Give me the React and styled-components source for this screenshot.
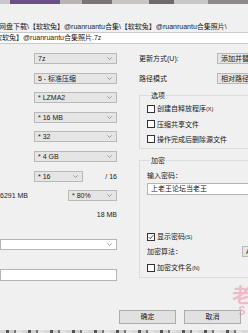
import React from "react";
import styled, { createGlobalStyle } from "styled-components";

const Global = createGlobalStyle`
  html, body { margin: 0; padding: 0; background: #f0f0f0; }
  body { font-family: "Liberation Sans", "Noto Sans CJK SC", sans-serif; }
`;

const Dialog = styled.div`
  position: relative;
  width: 248px;
  height: 333px;
  overflow: hidden;
  background: #f0f0f0;
  display: flex;
  flex-direction: column;
  font-family: "Liberation Sans", "Noto Sans CJK SC", sans-serif;
  font-size: 7px;
  line-height: 9px;
  color: #1a1a1a;
`;

const Strip = styled.div`
  flex: none;
  height: ${(p) => p.$h}px;
  background: ${(p) =>
    p.$bottom
      ? "repeating-linear-gradient(90deg, #d8d8d8 0 6px, #555 6px 9px, #cfcfcf 9px 14px, #777 14px 16px, #e2e2e2 16px 22px)"
      : "linear-gradient(90deg, #cac6cc 0 4%, #6b4f86 4% 24%, #b9b4b2 24% 33%, #7b7474 33% 45%, #c8c4c2 45% 60%, #6e6a6d 60% 70%, #c9c6c6 70% 84%, #8d8a89 84% 100%)"};
  margin-top: ${(p) => (p.$bottom ? "auto" : "0")};
`;

const PathBlock = styled.div`
  flex: none;
  margin-top: 17.5px;
  display: flex;
  flex-direction: column;
  gap: 1.5px;
`;

const PathLine = styled.div`
  white-space: nowrap;
  overflow: hidden;
  height: 9px;
  text-indent: ${(p) => p.$shift}px;
`;

const PathBox = styled.div`
  white-space: nowrap;
  overflow: hidden;
  height: 10px;
  line-height: 10px;
  background: #fff;
  border-top: 1px solid #c9c9c9;
  border-bottom: 1px solid #c9c9c9;
  text-indent: ${(p) => p.$shift}px;
`;

const Body = styled.div`
  flex: none;
  margin-top: 9px;
  display: flex;
  align-items: flex-start;
`;

const LeftCol = styled.div`
  flex: none;
  width: 117px;
  display: flex;
  flex-direction: column;
`;

const ComboStack = styled.div`
  display: flex;
  flex-direction: column;
  align-items: flex-end;
  gap: 8.6px;
`;

const Row = styled.div`
  display: flex;
  align-items: center;
  justify-content: space-between;
  width: 100%;
  height: 11px;
`;

const ComboBox = styled.div`
  flex: none;
  box-sizing: border-box;
  width: ${(p) => p.$w}px;
  height: 11px;
  display: flex;
  align-items: center;
  justify-content: space-between;
  padding: 0 4px 0 3px;
  background: ${(p) => (p.$white ? "#fff" : "#e5e5e5")};
  border: 1px solid ${(p) => (p.$white ? "#b5b5b5" : "#b9b9b9")};
  white-space: nowrap;
  overflow: hidden;
`;

const Arrow = () => (
  <svg width="5" height="3" viewBox="0 0 5 3" style={{ flex: "none" }}>
    <polyline points="0.3,0.3 2.5,2.5 4.7,0.3" fill="none" stroke="#8a8a8a" strokeWidth="0.8" />
  </svg>
);

const Combo = ({ w, white, children, arrow = true }) => (
  <ComboBox $w={w} $white={white}>
    <span>{children}</span>
    {arrow && <Arrow />}
  </ComboBox>
);

const RightText = styled.div`
  text-align: right;
  margin-top: ${(p) => p.$mt || 0}px;
`;

const Spacer = styled.div`
  width: ${(p) => p.$w}px;
  flex: none;
`;

const InputBox = styled.div`
  box-sizing: border-box;
  width: ${(p) => (p.$w ? `${p.$w}px` : "100%")};
  height: 12px;
  line-height: 10px;
  padding-left: 3px;
  background: #fff;
  border: 1px solid #b5b5b5;
  margin-top: ${(p) => p.$mt || 0}px;
  white-space: nowrap;
  overflow: hidden;
`;

const WideCombo = styled(ComboBox)`
  width: 100%;
  margin-top: ${(p) => p.$mt || 0}px;
`;

const RightCol = styled.div`
  flex: none;
  width: 150px;
  margin-left: 22px;
  display: flex;
  flex-direction: column;
`;

const FieldRow = styled.div`
  display: flex;
  align-items: center;
  height: 11px;
  margin-top: ${(p) => p.$mt || 0}px;
`;

const FieldLabel = styled.span`
  flex: none;
  width: ${(p) => p.$w}px;
  white-space: nowrap;
`;

const Group = styled.fieldset`
  margin: ${(p) => p.$mt}px 0 0 0;
  padding: ${(p) => p.$pt}px 0 ${(p) => p.$pb}px 7px;
  border: 1px solid #dcdcdc;
  border-right: none;
  display: flex;
  flex-direction: column;
  min-width: 0;
`;

const Legend = styled.legend`
  margin-left: 3px;
  padding: 0 1px;
  line-height: 9px;
`;

const CheckRow = styled.label`
  display: flex;
  align-items: center;
  gap: 2px;
  height: 9px;
  margin-top: ${(p) => p.$mt || 0}px;
  white-space: nowrap;
`;

const Box = styled.span`
  flex: none;
  box-sizing: border-box;
  width: 8px;
  height: 8px;
  border: 1px solid #333;
  background: #fff;
  display: flex;
  align-items: center;
  justify-content: center;
`;

const Small = styled.span`
  font-size: 5.5px;
`;

const Check = ({ checked, children, mt }) => (
  <CheckRow $mt={mt}>
    <Box>
      {checked && (
        <svg width="6" height="6" viewBox="0 0 6 6">
          <polyline points="0.8,3.2 2.3,4.7 5.2,1.2" fill="none" stroke="#222" strokeWidth="0.8" />
        </svg>
      )}
    </Box>
    <span>{children}</span>
  </CheckRow>
);

const PlainText = styled.div`
  height: 9px;
  margin-top: ${(p) => p.$mt || 0}px;
  white-space: nowrap;
`;

const ButtonRow = styled.div`
  flex: none;
  display: flex;
  gap: 8px;
  padding-left: 119px;
  margin-top: 29px;
`;

const Button = styled.div`
  flex: none;
  box-sizing: border-box;
  width: 57px;
  height: 14px;
  display: flex;
  align-items: center;
  justify-content: center;
  background: #e1e1e1;
  border: 1px solid #adadad;
`;

const Watermark = styled.div`
  position: absolute;
  right: -4px;
  top: 285px;
  display: flex;
  flex-direction: column;
  align-items: center;
  color: rgba(236, 120, 150, 0.45);
  font-family: "Noto Sans CJK SC", sans-serif;
  font-weight: 700;
  line-height: 1;
`;

const WmBig = styled.span`
  font-size: 20px;
`;

const WmSmall = styled.span`
  font-size: 12px;
  margin-top: -1px;
`;

export default function App() {
  return (
    <>
      <Global />
      <Dialog>
        <Strip $h={4} />
        <PathBlock>
          <PathLine $shift={-15}>
            百度网盘下载\【软软兔】@ruanruantu合集\【软软兔】@ruanruantu合集照片\
          </PathLine>
          <PathBox $shift={-12}>【软软兔】@ruanruantu合集照片.7z</PathBox>
        </PathBlock>
        <Body>
          <LeftCol>
            <ComboStack>
              <Combo w={83}>7z</Combo>
              <Combo w={83}>5 - 标准压缩</Combo>
              <Combo w={83}>* LZMA2</Combo>
              <Combo w={83}>* 16 MB</Combo>
              <Combo w={83}>* 32</Combo>
              <Combo w={83}>* 4 GB</Combo>
              <Row>
                <Spacer $w={34} />
                <Combo w={49}>* 16</Combo>
                <span style={{ marginLeft: "auto" }}>/ 16</span>
              </Row>
              <Row>
                <span>6291 MB</span>
                <Combo w={49}>* 80%</Combo>
              </Row>
            </ComboStack>
            <RightText $mt={9}>18 MB</RightText>
            <WideCombo $white $mt={19.5}>
              <span />
              <Arrow />
            </WideCombo>
            <InputBox $mt={19} />
          </LeftCol>
          <RightCol>
            <FieldRow>
              <FieldLabel $w={78}>更新方式(U):</FieldLabel>
              <Combo w={90} arrow={false}>添加并替换文件</Combo>
            </FieldRow>
            <FieldRow $mt={9}>
              <FieldLabel $w={78}>路径模式</FieldLabel>
              <Combo w={90} arrow={false}>相对路径</Combo>
            </FieldRow>
            <Group $mt={6.5} $pt={5} $pb={4}>
              <Legend>选项</Legend>
              <Check>
                创建自释放程序<Small>(X)</Small>
              </Check>
              <Check mt={6}>压缩共享文件</Check>
              <Check mt={6}>操作完成后删除源文件</Check>
            </Group>
            <Group $mt={7.5} $pt={6} $pb={5}>
              <Legend>加密</Legend>
              <PlainText>输入密码：</PlainText>
              <InputBox $mt={2.5}>上老王论坛当老王</InputBox>
              <Check checked mt={37.5}>
                显示密码<Small>(S)</Small>
              </Check>
              <FieldRow $mt={5}>
                <FieldLabel $w={95}>加密算法：</FieldLabel>
                <Combo w={60}>AES-256</Combo>
              </FieldRow>
              <Check mt={6}>
                加密文件名<Small>(N)</Small>
              </Check>
            </Group>
          </RightCol>
        </Body>
        <ButtonRow>
          <Button>确定</Button>
          <Button>取消</Button>
        </ButtonRow>
        <Strip $h={3} $bottom />
        <Watermark>
          <WmBig>老</WmBig>
          <WmSmall>S</WmSmall>
        </Watermark>
      </Dialog>
    </>
  );
}
